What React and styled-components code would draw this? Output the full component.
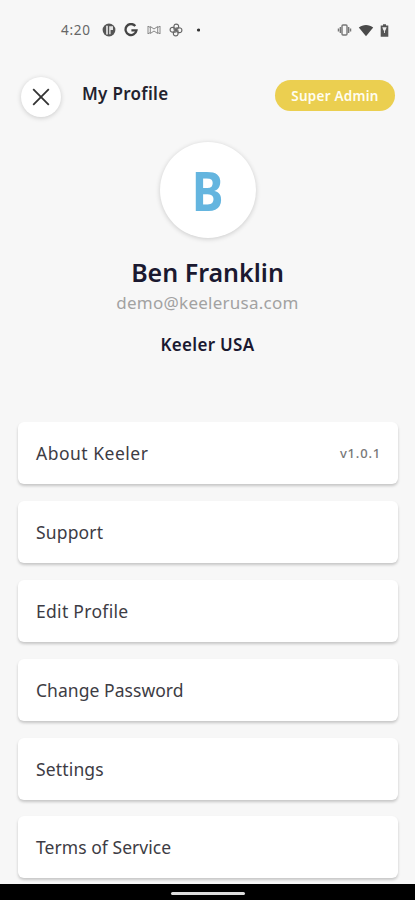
import styled, { createGlobalStyle } from "styled-components";

const GlobalStyle = createGlobalStyle`
  * {
    box-sizing: border-box;
  }
  body {
    margin: 0;
    background-color: #f7f7f7;
    font-family: "Noto Sans", "Open Sans", sans-serif;
  }
  h1, h2, p, ul {
    margin: 0;
    padding: 0;
  }
`;

const Screen = styled.div`
  display: flex;
  flex-direction: column;
  width: 415px;
  height: 900px;
  overflow: hidden;
  background-color: #f7f7f7;
`;
const StatusBar = styled.div`
  display: flex;
  align-items: center;
  justify-content: space-between;
  flex-shrink: 0;
  height: 60px;
  padding: 0 26px 0 61px;
  color: #666;
  & svg {
    display: block;
  }
`;
const StatusGroup = styled.div`
  display: flex;
  align-items: center;
  gap: ${(props) => props.$gap}px;
`;
const Time = styled.span`
  width: 32px;
  font-size: 13.5px;
  line-height: 18px;
  letter-spacing: 0.7px;
  white-space: nowrap;
`;
const Header = styled.header`
  display: flex;
  align-items: center;
  flex-shrink: 0;
  height: 74px;
  padding: 0 20px 0 21px;
`;
const CloseButton = styled.button`
  display: flex;
  align-items: center;
  justify-content: center;
  width: 40px;
  height: 40px;
  padding: 0;
  border: none;
  border-radius: 50%;
  background-color: #fff;
  box-shadow: 0 1px 5px rgba(0, 0, 0, 0.18);
`;
const Title = styled.h1`
  margin: 0 auto 7px 21px;
  color: #23222e;
  font-size: 17px;
  font-weight: 600;
  line-height: 24px;
  letter-spacing: 0.3px;
`;
const Badge = styled.span`
  width: 120px;
  height: 31px;
  margin-bottom: 3px;
  border-radius: 16px;
  background-color: #ebcf50;
  color: #fffdf0;
  font-size: 13.5px;
  font-weight: 600;
  line-height: 32px;
  letter-spacing: 0.25px;
  text-align: center;
`;
const Profile = styled.section`
  display: flex;
  flex-direction: column;
  align-items: center;
  flex-shrink: 0;
  height: 288.4px;
  padding-top: 8px;
`;
const Avatar = styled.div`
  width: 96px;
  height: 96px;
  border-radius: 50%;
  background-color: #fff;
  box-shadow: 0 1px 5px rgba(0, 0, 0, 0.18);
  text-align: center;
`;
const Initial = styled.span`
  display: inline-block;
  color: #64b5df;
  font-size: 53px;
  font-weight: 700;
  line-height: 97px;
  transform: scaleX(0.9);
`;
const Name = styled.h2`
  margin-top: 17px;
  color: #1b1930;
  font-size: 25px;
  font-weight: 600;
  line-height: 34px;
`;
const Email = styled.p`
  margin-top: 2px;
  color: #a2a2a2;
  font-size: 17px;
  line-height: 24px;
  letter-spacing: 0.25px;
`;
const Company = styled.p`
  margin-top: 18px;
  color: #1b1930;
  font-size: 17px;
  font-weight: 600;
  line-height: 24px;
  letter-spacing: 0.3px;
`;
const Menu = styled.ul`
  display: flex;
  flex-direction: column;
  flex: 1;
  gap: 16.8px;
  min-height: 0;
  padding: 0 17px 0 18px;
  overflow: hidden;
  list-style: none;
`;
const MenuItem = styled.li`
  display: flex;
  align-items: center;
  justify-content: space-between;
  flex-shrink: 0;
  height: 62px;
  padding: 0 17px 0 18px;
  border-radius: 6px;
  background-color: #fff;
  box-shadow: 0 2px 3px rgba(0, 0, 0, 0.2);
`;
const Label = styled.span`
  color: #3d3c44;
  font-size: 17.5px;
  line-height: 24px;
  letter-spacing: ${(props) => props.$spacing}px;
`;
const Version = styled.span`
  color: #777;
  font-size: 13px;
  font-weight: 500;
  letter-spacing: 0.8px;
`;
const NavBar = styled.div`
  display: flex;
  align-items: center;
  justify-content: center;
  flex-shrink: 0;
  height: 16px;
  background-color: #000;
`;
const Handle = styled.div`
  width: 74px;
  height: 3px;
  margin-top: 2px;
  border-radius: 2px;
  background-color: #ddd;
`;

const items = [
  { label: "About Keeler", spacing: 0.5, version: "v1.0.1" },
  { label: "Support", spacing: 0.15 },
  { label: "Edit Profile", spacing: 0.3 },
  { label: "Change Password", spacing: 0.05 },
  { label: "Settings", spacing: 0.15 },
  { label: "Terms of Service", spacing: 0.05 },
];

function NewsIcon() {
  return (
    <svg width="14" height="14" viewBox="0 0 14 14">
      <circle cx="7" cy="7" r="6.4" fill="#555" />
      <path d="M4.2 2.8h1.6v8.6H4.2Z" fill="#f0f0f0" />
      <path d="M7.2 3.2H11v3.9H8.6v4.2H7.2Z" fill="#e4e4e4" />
    </svg>
  );
}

function GoogleIcon() {
  return (
    <svg width="14" height="14" viewBox="0 0 14 14">
      <path
        d="M11.3 3A5.5 5.5 0 1 0 12.5 7.4H7.4"
        fill="none"
        stroke="#444"
        strokeWidth="2.3"
      />
    </svg>
  );
}

function NearbyIcon() {
  return (
    <svg width="14" height="10" viewBox="0 0 14 10" fill="none" stroke="#888" strokeWidth="1">
      <path d="M1 1v8M13 1v8M3.3 8.5v-7L7 4l3.7-2.5v7L7 6Z" />
      <path d="M1 1.2 3.3 2.5M13 1.2l-2.3 1.3M1 8.8l2.3-1.3M13 8.8l-2.3-1.3" />
    </svg>
  );
}

function FanIcon() {
  return (
    <svg width="14" height="14" viewBox="0 0 14 14" fill="none" stroke="#666" strokeWidth="1.2">
      <path d="M7 7H5.2Q4 1.1 7 1.1T9.6 4.2Q9.2 6 7 7Z" />
      <path d="M7 7V5.2Q12.9 4 12.9 7T9.8 9.6Q8 9.2 7 7Z" />
      <path d="M7 7h1.8Q10 12.9 7 12.9T4.4 9.8Q4.8 8 7 7Z" />
      <path d="M7 7v1.8Q1.1 10 1.1 7T4.2 4.4Q6 4.8 7 7Z" />
    </svg>
  );
}

function DotIcon() {
  return (
    <svg width="8" height="4" viewBox="0 0 8 4">
      <circle cx="6.5" cy="2" r="1.6" fill="#333" />
    </svg>
  );
}

function VibrateIcon() {
  return (
    <svg width="15" height="12" viewBox="0 0 15 12" fill="none" stroke="#777">
      <rect x="5" y="1" width="5" height="10" rx="1" strokeWidth="1.4" />
      <path d="M3.4 3v6M11.6 3v6" strokeWidth="1.5" />
      <path d="M1.5 4.6v2.8M13.5 4.6v2.8" strokeWidth="1.5" />
    </svg>
  );
}

function WifiIcon() {
  return (
    <svg width="16" height="13" viewBox="0 0 16 13">
      <path d="M.8 3.6C4.8.1 11.2.1 15.2 3.6L8 12.3Z" fill="#4a4a4a" />
    </svg>
  );
}

function BatteryIcon() {
  return (
    <svg width="9" height="13" viewBox="0 0 9 13">
      <path d="M3 .3h3v1.3h2.3v11.1H.7V1.6H3Z" fill="#555" />
      <path d="M2.3 3.2h4.4L5.4 6.5h-.5v2.4H4V6.5h-.5Z" fill="#eee" />
    </svg>
  );
}

function CloseIcon() {
  return (
    <svg width="18" height="18" viewBox="0 0 18 18">
      <path d="M1.2 1.2l15.6 15.6M16.8 1.2L1.2 16.8" stroke="#333" strokeWidth="1.8" />
    </svg>
  );
}

export default function App() {
  return (
    <>
      <GlobalStyle />
      <Screen>
        <StatusBar>
          <StatusGroup $gap={8.5}>
            <Time>4:20</Time>
            <NewsIcon />
            <GoogleIcon />
            <NearbyIcon />
            <FanIcon />
            <DotIcon />
          </StatusGroup>
          <StatusGroup $gap={6}>
            <VibrateIcon />
            <WifiIcon />
            <BatteryIcon />
          </StatusGroup>
        </StatusBar>
        <Header>
          <CloseButton aria-label="Close">
            <CloseIcon />
          </CloseButton>
          <Title>My Profile</Title>
          <Badge>Super Admin</Badge>
        </Header>
        <Profile>
          <Avatar>
            <Initial>B</Initial>
          </Avatar>
          <Name>Ben Franklin</Name>
          <Email>demo@keelerusa.com</Email>
          <Company>Keeler USA</Company>
        </Profile>
        <Menu>
          {items.map((item) => (
            <MenuItem key={item.label}>
              <Label $spacing={item.spacing}>{item.label}</Label>
              {item.version && <Version>{item.version}</Version>}
            </MenuItem>
          ))}
        </Menu>
        <NavBar>
          <Handle />
        </NavBar>
      </Screen>
    </>
  );
}
